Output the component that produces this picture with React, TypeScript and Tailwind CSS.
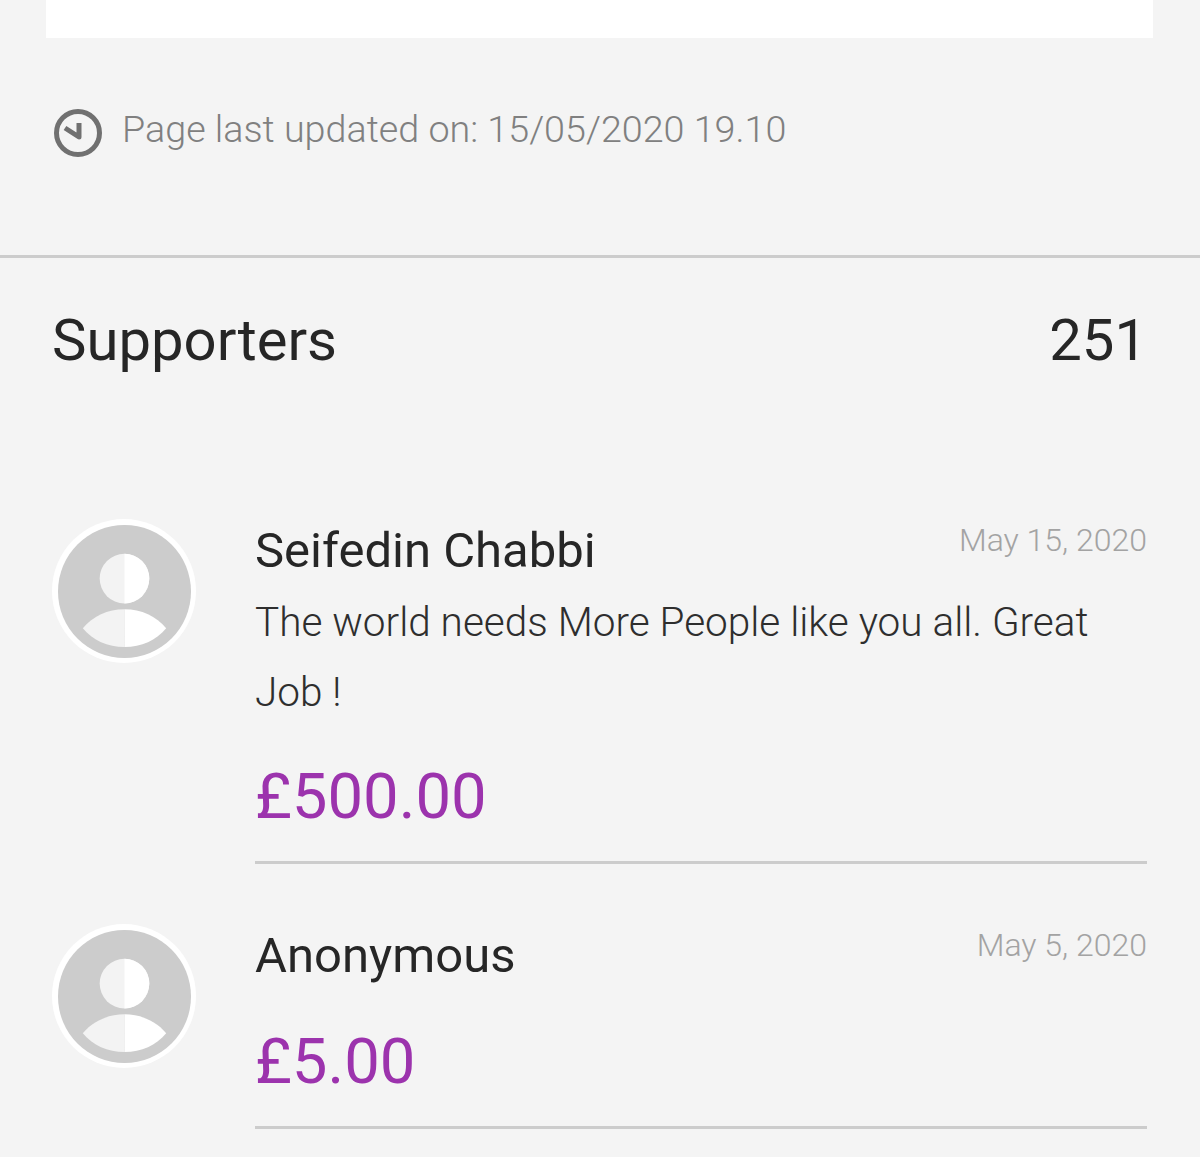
const font = "font-['Roboto',sans-serif]";

const Avatar = () => (
  <div className="w-[144px] h-[144px] -mt-[1px] rounded-full bg-white flex items-center justify-center shrink-0">
    <svg width="133" height="133" viewBox="0 0 134 134">
      <circle cx="67" cy="67" r="67" fill="#cccccc" />
      <circle cx="67" cy="54" r="25" fill="#f3f3f3" />
      <path d="M67 29a25 25 0 0 1 0 50z" fill="#ffffff" />
      <path d="M25 104C35 92 50 85 67 85V123C50 123 35 116 25 104z" fill="#f3f3f3" />
      <path d="M109 104C99 92 84 85 67 85V123C84 123 99 116 109 104z" fill="#ffffff" />
    </svg>
  </div>
);

type Supporter = {
  name: string;
  date: string;
  message?: string;
  amount: string;
};

const supporters: Supporter[] = [
  {
    name: "Seifedin Chabbi",
    date: "May 15, 2020",
    message: "The world needs More People like you all. Great Job !",
    amount: "£500.00",
  },
  { name: "Anonymous", date: "May 5, 2020", amount: "£5.00" },
];

const SupporterRow = ({ supporter }: { supporter: Supporter }) => (
  <div className="flex">
    <div className="w-[203px] shrink-0">
      <Avatar />
    </div>
    <div className="flex-1 border-b-[3px] border-[#cccccc]">
      <div className="flex justify-between items-start">
        <h3 className="text-[49px] leading-[62px] text-[#262626] font-normal">{supporter.name}</h3>
        <span className="text-[32px] leading-[40px] font-light text-[#a3a3a3]">{supporter.date}</span>
      </div>
      {supporter.message && (
        <p className="text-[40.5px] leading-[70px] font-light text-[#2e2e2e] mt-[5px]">{supporter.message}</p>
      )}
      <p className={`text-[63.4px] leading-[76px] text-[#9c33ad] mb-[27px] ${supporter.message ? "mt-[31px]" : "mt-[36px]"}`}>
        {supporter.amount}
      </p>
    </div>
  </div>
);

export default function App() {
  return (
    <div className={`${font} bg-[#f4f4f4] h-[1157px] overflow-hidden`}>
      <div className="mx-[46px] w-[1107px] h-[38px] bg-white" />

      <div className="flex items-center gap-[20px] pl-[54px] mt-[66px] h-[50px]">
        <svg className="mt-[8px]" width="48" height="50" viewBox="0 0 48 50" fill="none" stroke="#707070">
          <circle cx="24" cy="25" r="21.5" strokeWidth="5" />
          <path d="M25 15V29L11 20" strokeWidth="5" strokeLinejoin="round" />
        </svg>
        <span className="text-[37.7px] font-light text-[#808080]">Page last updated on: 15/05/2020 19.10</span>
      </div>

      <div className="mt-[101px] border-t-[3px] border-[#cccccc]" />

      <div className="flex justify-between items-center pl-[52px] pr-[53px] mt-[49px] h-[66px] text-[58px] text-[#262626]">
        <span>Supporters</span>
        <span>251</span>
      </div>

      <div className="pl-[52px] pr-[53px] mt-[147px] flex flex-col gap-[61px]">
        {supporters.map((s) => (
          <SupporterRow key={s.name} supporter={s} />
        ))}
      </div>
    </div>
  );
}
